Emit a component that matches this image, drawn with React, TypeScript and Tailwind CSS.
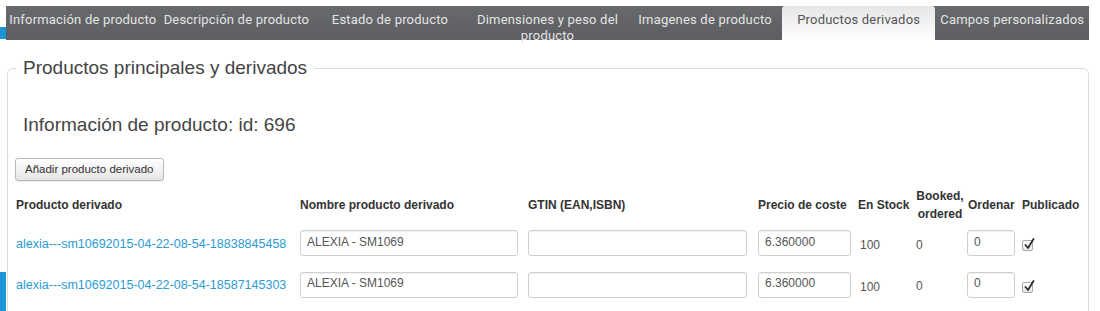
import React from "react";

const tabs = [
  "Información de producto",
  "Descripción de producto",
  "Estado de producto",
  "Dimensiones y peso del producto",
  "Imagenes de producto",
  "Productos derivados",
  "Campos personalizados",
];

const rows = [
  { code: "alexia---sm10692015-04-22-08-54-18838845458" },
  { code: "alexia---sm10692015-04-22-08-54-18587145303" },
];

const cols = "grid grid-cols-[284px_228px_230px_100px_56px_54px_54px_1fr]";

function CheckMark() {
  return (
    <span className="relative block h-[11px] w-[11px] rounded-[2px] border border-[#a9a9a9] bg-gradient-to-b from-white to-[#e9e9e9]">
      <svg className="absolute -top-[3px] left-[1px]" width="11" height="12" viewBox="0 0 11 12">
        <path d="M1.5 7 L4 10 L9.5 1" fill="none" stroke="#2e2e2e" strokeWidth="1.8" strokeLinecap="round" strokeLinejoin="round" />
      </svg>
    </span>
  );
}

export default function App() {
  return (
    <div className="flex h-[311px] w-[1100px] overflow-hidden bg-white font-['Liberation_Sans',Arial,sans-serif]">
      {/* left gutter peeking */}
      <div className="flex w-[6px] shrink-0 flex-col">
        <div className="h-[28px]" />
        <div className="h-[13px] bg-[#1b95d6]" />
        <div className="h-[242px]" />
        <div className="h-[40px] bg-[#1b95d6]" />
      </div>

      <div className="flex flex-col pt-[6px]">
        {/* Tabs */}
        <div className="flex h-[34px] w-[1083px] bg-gradient-to-b from-[#68696c] to-[#5d5e61] font-['Roboto',sans-serif] text-[13px] leading-[16px] tracking-[0.2px]">
          {tabs.map((t) => {
            const active = t === "Productos derivados";
            return (
              <div
                key={t}
                className={
                  active
                    ? "flex-1 rounded-t-[3px] bg-gradient-to-b from-[#e6e6e6] to-white px-[2px] pt-[6px] text-center text-[#555] whitespace-nowrap"
                    : t.startsWith("Dimensiones")
                    ? "flex-1 px-[6px] pt-[6px] text-center text-[#e4e4e4]"
                    : "flex-1 px-[2px] pt-[6px] text-center text-[#e4e4e4] whitespace-nowrap"
                }
              >
                {t}
              </div>
            );
          })}
        </div>

        {/* Fieldset */}
        <fieldset className="ml-[1px] mt-[16px] w-[1082px] rounded-[6px] border border-[#dcdcdc] pb-[40px] pl-[6px]">
          <legend className="ml-[2px] px-[7px] text-[19px] leading-[24px] text-[#444]">
            Productos principales y derivados
          </legend>

          <h3 className="ml-[9px] mt-[33px] text-[19px] leading-[24px] text-[#444]">
            Información de producto: id: 696
          </h3>

          <button className="ml-[1px] mt-[21px] h-[23px] rounded-[3px] border border-[#b9b9b9] bg-gradient-to-b from-white to-[#e6e6e6] px-[9px] text-[11.5px] text-[#333] shadow-[0_1px_1px_rgba(0,0,0,0.08)]">
            Añadir producto derivado
          </button>

          {/* Header */}
          <div className={`${cols} mt-[5px] h-[38px] items-center text-[12px] font-bold text-[#333]`}>
            <div className="pl-[2px]">Producto derivado</div>
            <div className="pl-[2px]">Nombre producto derivado</div>
            <div className="pl-[2px]">GTIN (EAN,ISBN)</div>
            <div className="pl-[2px]">Precio de coste</div>
            <div className="pl-[2px]">En Stock</div>
            <div className="pl-[2px] text-center leading-[18px]">
              Booked,
              <br />
              ordered
            </div>
            <div className="pl-[2px]">Ordenar</div>
            <div className="pl-[2px]">Publicado</div>
          </div>

          {/* Rows */}
          <div className="mt-[6px] flex flex-col gap-[15.5px]">
            {rows.map((r) => (
              <div key={r.code} className={`${cols} h-[26px] items-center text-[12px] text-[#555]`}>
                <div className="pl-[2px] pt-[2px]">
                  <a href="#" className="text-[12.5px] text-[#2b9bd4]">
                    {r.code}
                  </a>
                </div>
                <div className="pl-[2px]">
                  <input
                    defaultValue="ALEXIA - SM1069"
                    className="h-[26px] w-[218px] rounded-[3px] border border-[#cfcfcf] px-[6px] pb-[3px] text-[12px] text-[#555] shadow-[inset_0_1px_1px_rgba(0,0,0,0.06)] outline-none"
                  />
                </div>
                <div className="pl-[2px]">
                  <input
                    defaultValue=""
                    className="h-[26px] w-[219px] rounded-[3px] border border-[#cfcfcf] px-[6px] pb-[3px] text-[12px] text-[#555] shadow-[inset_0_1px_1px_rgba(0,0,0,0.06)] outline-none"
                  />
                </div>
                <div className="pl-[2px]">
                  <input
                    defaultValue="6.360000"
                    className="h-[26px] w-[93px] rounded-[3px] border border-[#cfcfcf] px-[6px] pb-[3px] text-[12px] text-[#555] shadow-[inset_0_1px_1px_rgba(0,0,0,0.06)] outline-none"
                  />
                </div>
                <div className="pl-[4px] pt-[4px]">100</div>
                <div className="pl-[4px] pt-[3px]">0</div>
                <div className="pl-[1px]">
                  <input
                    defaultValue="0"
                    className="h-[26px] w-[48px] rounded-[3px] border border-[#cfcfcf] px-[6px] pb-[3px] text-[12px] text-[#555] shadow-[inset_0_1px_1px_rgba(0,0,0,0.06)] outline-none"
                  />
                </div>
                <div className="self-end pb-[5px] pl-[2px]">
                  <CheckMark />
                </div>
              </div>
            ))}
          </div>
        </fieldset>
      </div>
    </div>
  );
}
